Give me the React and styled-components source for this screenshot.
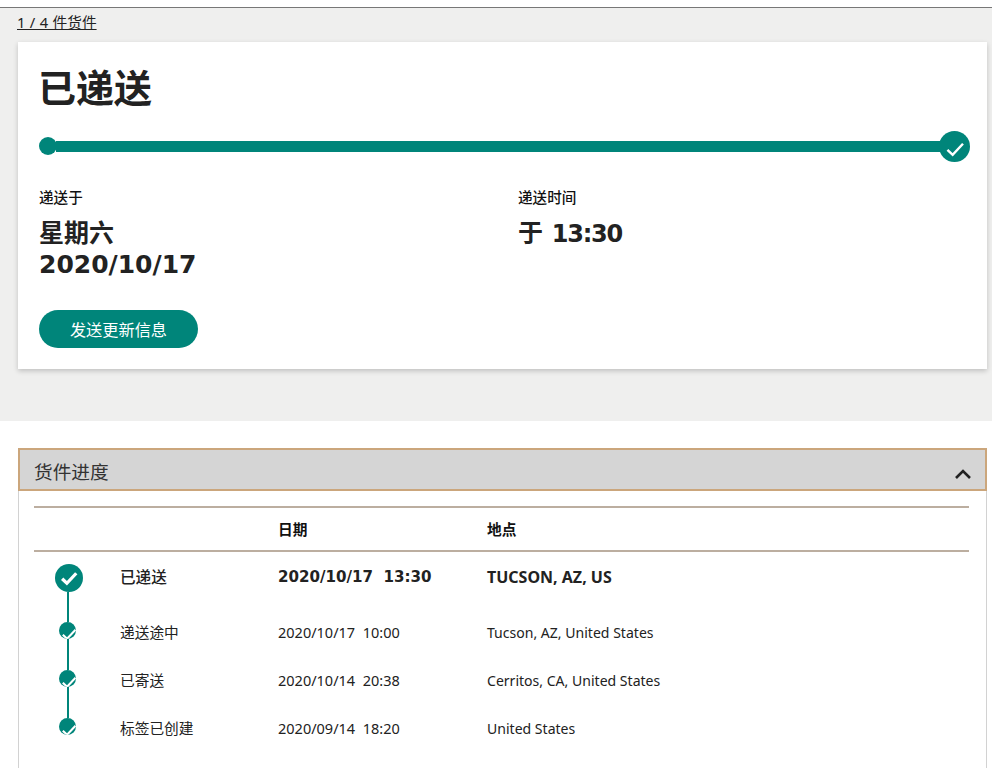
import React from "react";
import styled, { createGlobalStyle } from "styled-components";

const Global = createGlobalStyle`
  html, body { margin: 0; padding: 0; background: #fff; }
  body {
    font-family: "DejaVu Sans", "Noto Sans CJK SC", sans-serif;
    color: #222;
    overflow: hidden;
  }
`;

const Page = styled.div`
  width: 992px;
  height: 768px;
  overflow: hidden;
  padding-top: 7px;
  box-sizing: border-box;
`;

const Band = styled.section`
  background: #efefee;
  border-top: 1px solid #777;
  height: 414px;
  padding: 0 5px 0 18px;
  box-sizing: border-box;
`;

const ShipmentLink = styled.a`
  display: block;
  width: fit-content;
  height: 34px;
  margin-left: -1px;
  padding-top: 6px;
  box-sizing: border-box;
  font-family: "Noto Sans", "Noto Sans CJK SC", sans-serif;
  font-size: 14.7px;
  line-height: 17px;
  word-spacing: 0.6px;
  color: #222;
  text-decoration: underline;
`;

const Card = styled.div`
  background: #fff;
  height: 327px;
  padding: 22px 17px 0 21px;
  box-sizing: border-box;
  box-shadow: 0 2px 5px rgba(0, 0, 0, 0.2);
`;

const Title = styled.h1`
  margin: 0 0 0 -1px;
  font-size: 38px;
  line-height: 50px;
  font-weight: 700;
  color: #222;
`;

const Track = styled.div`
  display: flex;
  align-items: center;
  height: 32px;
  margin-top: 16px;
`;

const StartDot = styled.span`
  width: 18px;
  height: 18px;
  border-radius: 50%;
  background: #00857a;
  flex: none;
`;

const TrackBar = styled.span`
  flex: 1;
  height: 11px;
  background: #00857a;
  margin: 0 -1px;
`;

const EndDot = styled.span`
  width: 31px;
  height: 31px;
  border-radius: 50%;
  background: #00857a;
  flex: none;
  display: flex;
  align-items: center;
  justify-content: center;
  padding-top: 5px;
  box-sizing: border-box;
`;

const Facts = styled.div`
  display: grid;
  grid-template-columns: 479px 1fr;
  margin-top: 25px;
`;

const FactLabel = styled.div`
  font-size: 14.6px;
  line-height: 22px;
  font-weight: 500;
  color: #111;
`;

const FactValue = styled.div`
  margin-top: 9px;
  font-size: 25px;
  line-height: 31px;
  font-weight: 700;
  color: #222;
`;

const TimeDigits = styled.span`
  font-size: 24px;
  letter-spacing: -1.2px;
`;

const PillButton = styled.button`
  display: block;
  width: 159px;
  height: 38px;
  margin-top: 30px;
  border: 0;
  border-radius: 19px;
  background: #00857a;
  color: #fff;
  font-family: inherit;
  font-size: 16.2px;
  padding: 0;
`;

const Accordion = styled.section`
  margin: 27px 5px 0 18px;
  border-left: 1px solid #d2d2d2;
  border-right: 1px solid #d2d2d2;
  height: 330px;
`;

const AccordionHead = styled.div`
  height: 43px;
  margin: 0 -1px;
  padding: 2px 14px 0 14px;
  box-sizing: border-box;
  background: #d5d5d5;
  border: 2px solid #cba67c;
  display: flex;
  justify-content: space-between;
  align-items: center;
  font-size: 18.7px;
  color: #333;
`;

const ChevronWrap = styled.span`
  display: flex;
  margin-top: 6px;
`;

const Table = styled.div`
  margin: 15px 17px 0 15px;
`;

const Columns = "87px 157px 209px 1fr";

const HeadRow = styled.div`
  display: grid;
  grid-template-columns: ${Columns};
  height: 42px;
  align-items: center;
  border-top: 2px solid #bcaea0;
  border-bottom: 2px solid #bcaea0;
  font-size: 14.7px;
  font-weight: 700;
  color: #111;
`;

const HeadCell = styled.span`
  padding-bottom: 2px;
`;

const Row = styled.div`
  display: grid;
  grid-template-columns: ${Columns};
  align-items: center;
  height: ${(p) => (p.$main ? "52px" : "48px")};
  margin-bottom: ${(p) => (p.$main ? "2px" : "0")};
  color: #222;
`;

const StatusText = styled.span`
  margin-left: -1px;
  font-size: ${(p) => (p.$main ? "15.6px" : "14.7px")};
  font-weight: ${(p) => (p.$main ? 500 : 400)};
  padding: ${(p) => (p.$main ? "0 0 4px" : "2px 0 0")};
`;

const DateText = styled.span`
  white-space: pre;
  font-family: ${(p) => (p.$main ? '"DejaVu Sans"' : '"Noto Sans"')}, sans-serif;
  font-size: ${(p) => (p.$main ? "15.1px" : "14.5px")};
  font-weight: ${(p) => (p.$main ? 700 : 400)};
  padding: ${(p) => (p.$main ? "0 0 2px" : "4px 0 0")};
`;

const PlaceText = styled.span`
  font-family: "Noto Sans", sans-serif;
  font-size: ${(p) => (p.$main ? "16px" : "14.05px")};
  font-weight: ${(p) => (p.$main ? 700 : 400)};
  padding: ${(p) => (p.$main ? "0 0 2px" : "4px 0 0")};
`;

const Node = styled.div`
  position: relative;
  width: 28px;
  height: ${(p) => (p.$main ? "28px" : "17px")};
  margin-left: ${(p) => (p.$main ? "21px" : "19.5px")};
  justify-self: start;
  display: flex;
  justify-content: center;
  &::after {
    content: "";
    display: ${(p) => (p.$last ? "none" : "block")};
    position: absolute;
    left: ${(p) => (p.$main ? "12px" : "13.5px")};
    top: ${(p) => (p.$main ? "28px" : "17px")};
    width: 2px;
    height: ${(p) => (p.$main ? "30px" : "31px")};
    background: #00857a;
  }
`;

const NodeDot = styled.span`
  width: ${(p) => (p.$main ? "28px" : "17px")};
  height: ${(p) => (p.$main ? "28px" : "17px")};
  border-radius: 50%;
  background: #00857a;
  overflow: hidden;
  display: flex;
  flex: none;
  align-items: ${(p) => (p.$main ? "center" : "flex-start")};
  justify-content: ${(p) => (p.$main ? "center" : "flex-start")};
  padding: ${(p) => (p.$main ? "0" : "3px 0 0 1px")};
  box-sizing: border-box;
  svg {
    flex: none;
  }
`;

const Check = ({ size, weight = 2.4 }) => (
  <svg width={size} height={size} viewBox="0 0 16 16" fill="none">
    <path d="M2.5 8.6 L6.3 12.2 L13.8 4.2" stroke="#fff" strokeWidth={weight} />
  </svg>
);

const Chevron = () => (
  <svg width="16" height="10" viewBox="0 0 16 10" fill="none">
    <path d="M1 9 L8 2 L15 9" stroke="#222" strokeWidth="2.6" />
  </svg>
);

const events = [
  { status: "已递送", date: "2020/10/17  13:30", place: "TUCSON, AZ, US", main: true },
  { status: "递送途中", date: "2020/10/17  10:00", place: "Tucson, AZ, United States" },
  { status: "已寄送", date: "2020/10/14  20:38", place: "Cerritos, CA, United States" },
  { status: "标签已创建", date: "2020/09/14  18:20", place: "United States", last: true },
];

export default function App() {
  return (
    <Page>
      <Global />
      <Band>
        <ShipmentLink href="#">1 / 4 件货件</ShipmentLink>
        <Card>
          <Title>已递送</Title>
          <Track>
            <StartDot />
            <TrackBar />
            <EndDot>
              <Check size={22} weight={1.8} />
            </EndDot>
          </Track>
          <Facts>
            <div>
              <FactLabel>递送于</FactLabel>
              <FactValue>
                星期六
                <br />
                2020/10/17
              </FactValue>
            </div>
            <div>
              <FactLabel>递送时间</FactLabel>
              <FactValue>
                于 <TimeDigits>13:30</TimeDigits>
              </FactValue>
            </div>
          </Facts>
          <PillButton>发送更新信息</PillButton>
        </Card>
      </Band>
      <Accordion>
        <AccordionHead>
          <span>货件进度</span>
          <ChevronWrap>
            <Chevron />
          </ChevronWrap>
        </AccordionHead>
        <Table>
          <HeadRow>
            <span />
            <span />
            <HeadCell>日期</HeadCell>
            <HeadCell>地点</HeadCell>
          </HeadRow>
          {events.map((e) => (
            <Row key={e.status} $main={e.main}>
              <Node $main={e.main} $last={e.last}>
                <NodeDot $main={e.main}>
                  <Check size={e.main ? 20 : 18} weight={e.main ? 2.6 : 1.9} />
                </NodeDot>
              </Node>
              <StatusText $main={e.main}>{e.status}</StatusText>
              <DateText $main={e.main}>{e.date}</DateText>
              <PlaceText $main={e.main}>{e.place}</PlaceText>
            </Row>
          ))}
        </Table>
      </Accordion>
    </Page>
  );
}
